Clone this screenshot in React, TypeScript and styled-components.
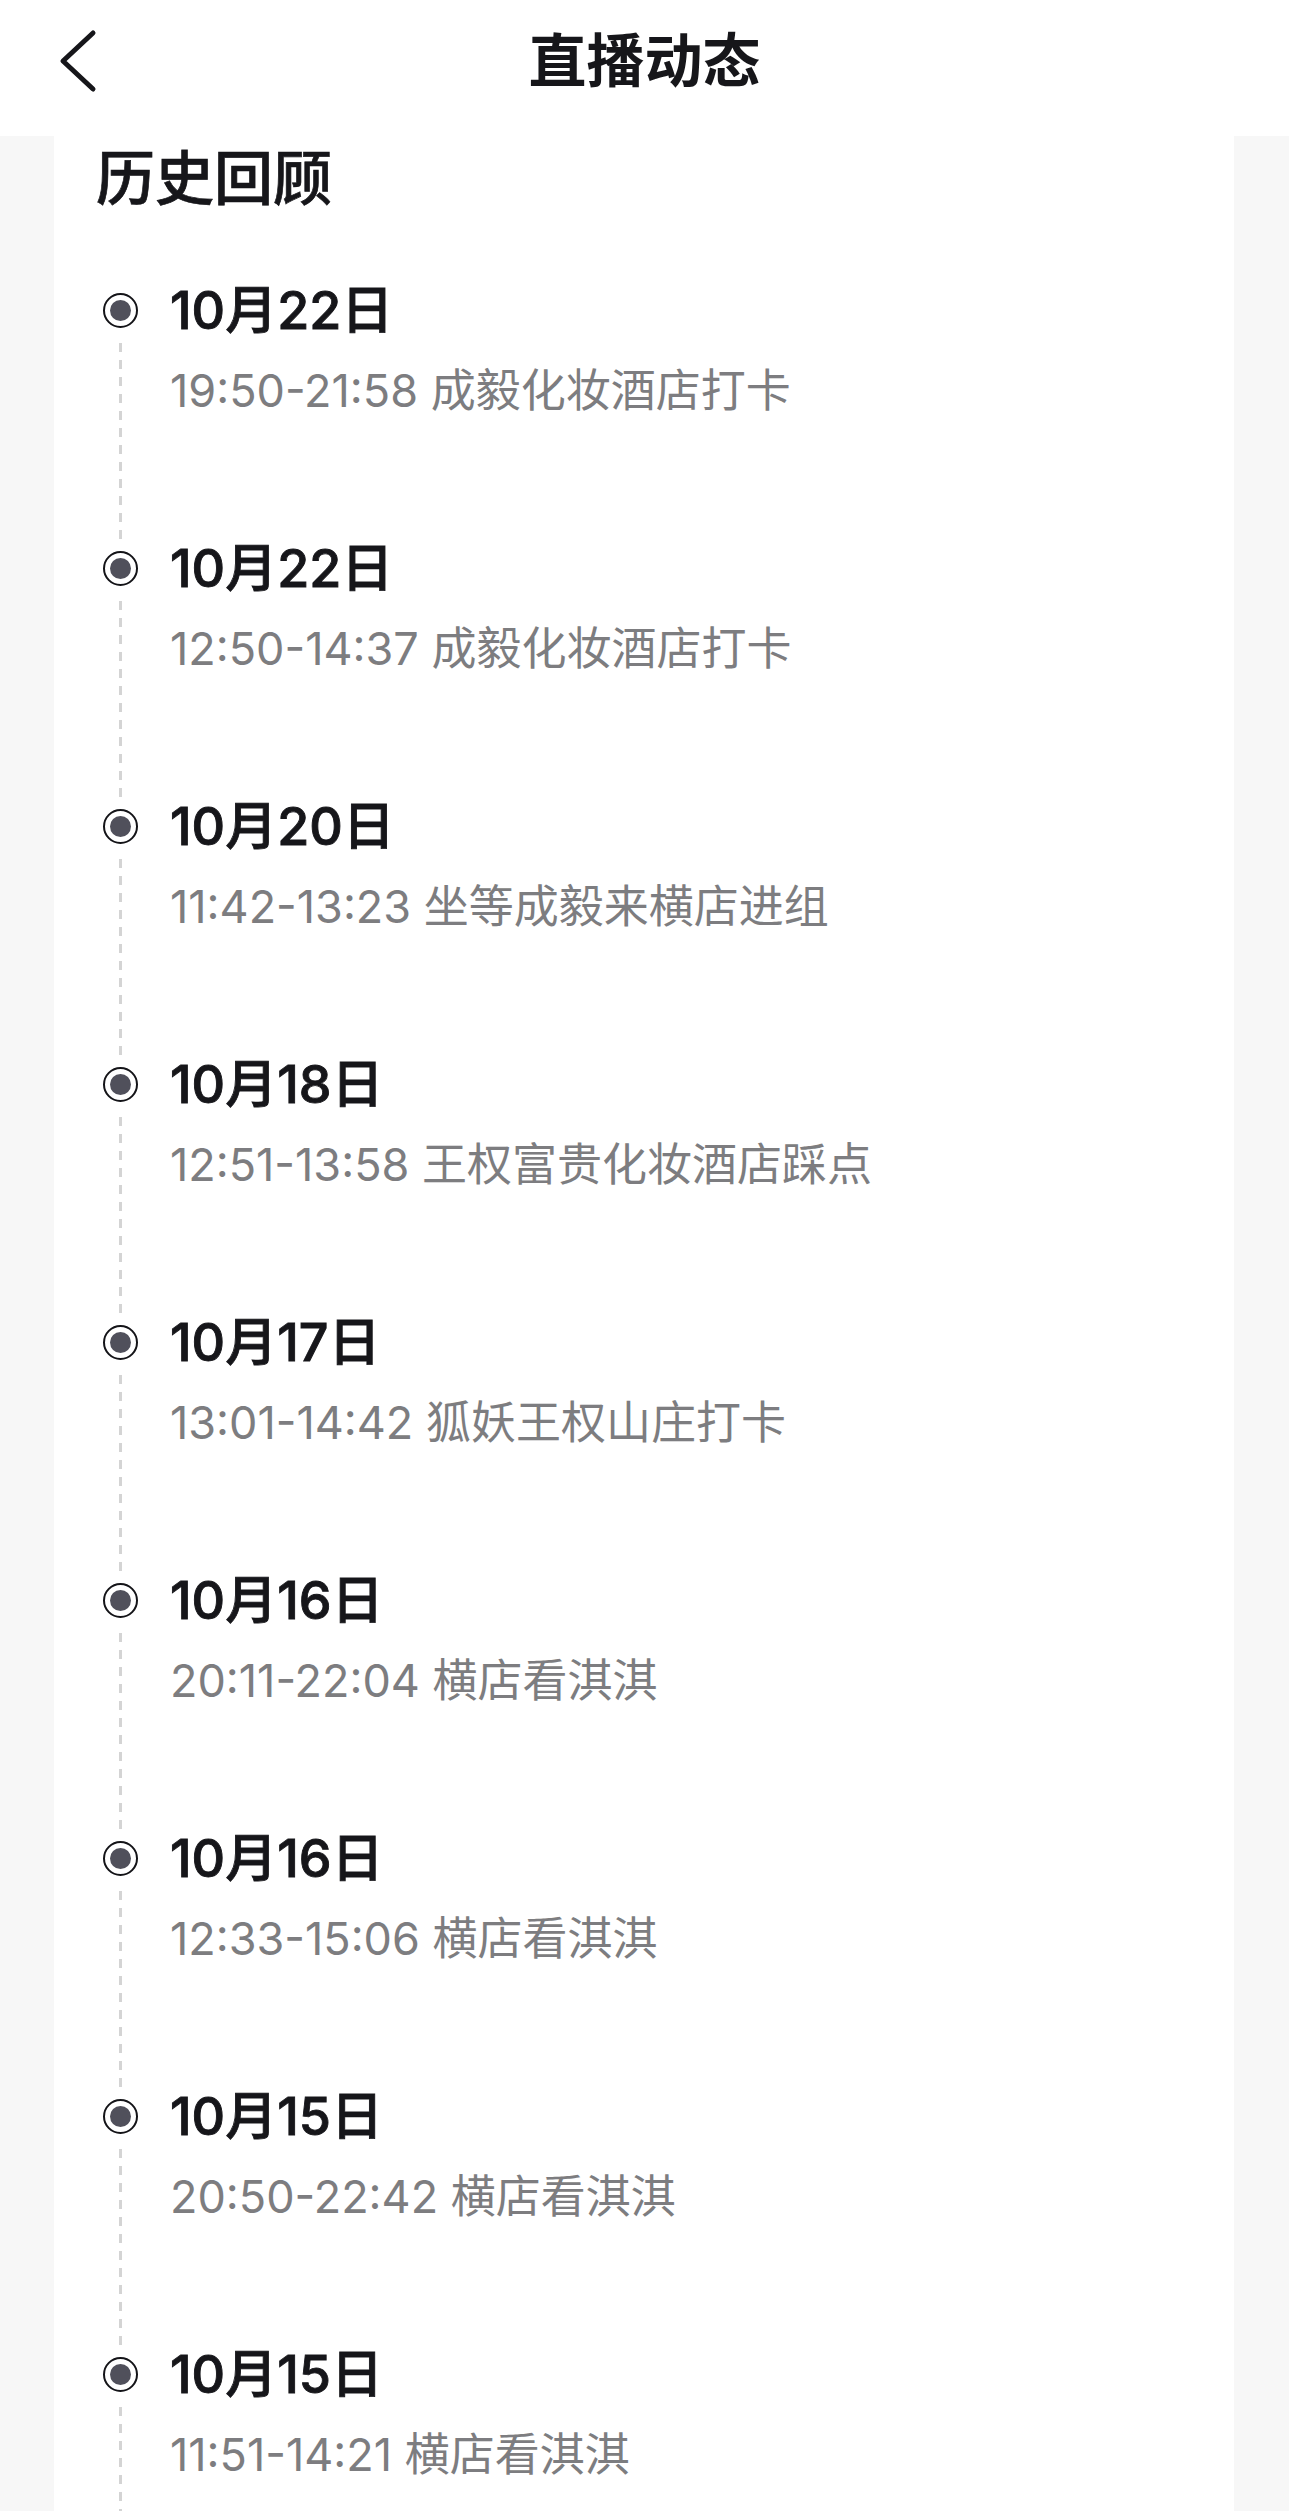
import React from 'react';
import styled, { createGlobalStyle } from 'styled-components';

interface LiveRecord {
    date: string;
    time: string;
    title: string;
}

const records: LiveRecord[] = [
    { date: '10月22日', time: '19:50-21:58', title: '成毅化妆酒店打卡' },
    { date: '10月22日', time: '12:50-14:37', title: '成毅化妆酒店打卡' },
    { date: '10月20日', time: '11:42-13:23', title: '坐等成毅来横店进组' },
    { date: '10月18日', time: '12:51-13:58', title: '王权富贵化妆酒店踩点' },
    { date: '10月17日', time: '13:01-14:42', title: '狐妖王权山庄打卡' },
    { date: '10月16日', time: '20:11-22:04', title: '横店看淇淇' },
    { date: '10月16日', time: '12:33-15:06', title: '横店看淇淇' },
    { date: '10月15日', time: '20:50-22:42', title: '横店看淇淇' },
    { date: '10月15日', time: '11:51-14:21', title: '横店看淇淇' },
];

const GlobalStyle = createGlobalStyle`
    html, body {
        margin: 0;
        padding: 0;
        background: #f7f7f7;
        font-family: Inter, "Noto Sans CJK SC", sans-serif;
        color: #16161a;
    }
`;

const Page = styled.div`
    min-height: 2511px;
    overflow: hidden;
`;

const Header = styled.header`
    position: relative;
    z-index: 1;
    height: 136px;
    padding-bottom: 14px;
    box-sizing: border-box;
    background: #fff;
    display: grid;
    grid-template-columns: 1fr auto 1fr;
    align-items: center;
`;

const BackButton = styled.div`
    display: flex;
    align-items: center;
    padding-left: 58px;
    height: 64px;
`;

const HeaderTitle = styled.h1`
    margin: 0;
    font-size: 58px;
    font-weight: 600;
    line-height: 78px;
    letter-spacing: 0;
`;

const Card = styled.main`
    margin: 0 55px 0 54px;
    background: #fff;
    padding: 4px 42px 0;
`;

const SectionTitle = styled.h2`
    margin: 0 0 63px;
    font-size: 59px;
    font-weight: 500;
    line-height: 78px;
    -webkit-text-stroke: 0.7px currentColor;
`;

const Timeline = styled.ul`
    list-style: none;
    margin: 0;
    padding: 0;
`;

const Item = styled.li`
    display: grid;
    grid-template-columns: 48px 1fr;
    column-gap: 26px;
    height: 258px;
`;

const Rail = styled.div`
    display: flex;
    flex-direction: column;
    align-items: center;
    padding-top: 12px;
`;

const Dot = styled.span`
    width: 35px;
    height: 35px;
    box-sizing: border-box;
    border: 2.5px solid #141418;
    border-radius: 50%;
    background: #fff;
    display: flex;
    align-items: center;
    justify-content: center;

    &::after {
        content: '';
        width: 21px;
        height: 21px;
        border-radius: 50%;
        background: #50505b;
    }
`;

const DashLine = styled.span`
    flex: 1;
    width: 3px;
    margin-top: 15px;
    background: repeating-linear-gradient(to bottom, #d4d4d4 0 9px, transparent 9px 17px);
`;

const Body = styled.div`
    display: flex;
    flex-direction: column;
`;

const DateText = styled.div`
    font-size: 52px;
    font-weight: 500;
    line-height: 60px;
    color: #16161a;
    -webkit-text-stroke: 0.9px currentColor;
`;

const Detail = styled.div`
    margin-top: 22px;
    font-size: 45px;
    line-height: 56px;
    color: #7d7d80;
    white-space: nowrap;
`;

function BackIcon() {
    return (
        <svg width="40" height="64" viewBox="0 0 40 64" fill="none">
            <path d="M35 4 L5 32 L35 60" stroke="#16161a" strokeWidth="5" strokeLinecap="round" strokeLinejoin="round" />
        </svg>
    );
}

export default function App() {
    return (
        <Page>
            <GlobalStyle />
            <Header>
                <BackButton>
                    <BackIcon />
                </BackButton>
                <HeaderTitle>直播动态</HeaderTitle>
                <div />
            </Header>
            <Card>
                <SectionTitle>历史回顾</SectionTitle>
                <Timeline>
                    {records.map((r, i) => (
                        <Item key={i}>
                            <Rail>
                                <Dot />
                                <DashLine />
                            </Rail>
                            <Body>
                                <DateText>{r.date}</DateText>
                                <Detail>{r.time} {r.title}</Detail>
                            </Body>
                        </Item>
                    ))}
                </Timeline>
            </Card>
        </Page>
    );
}
